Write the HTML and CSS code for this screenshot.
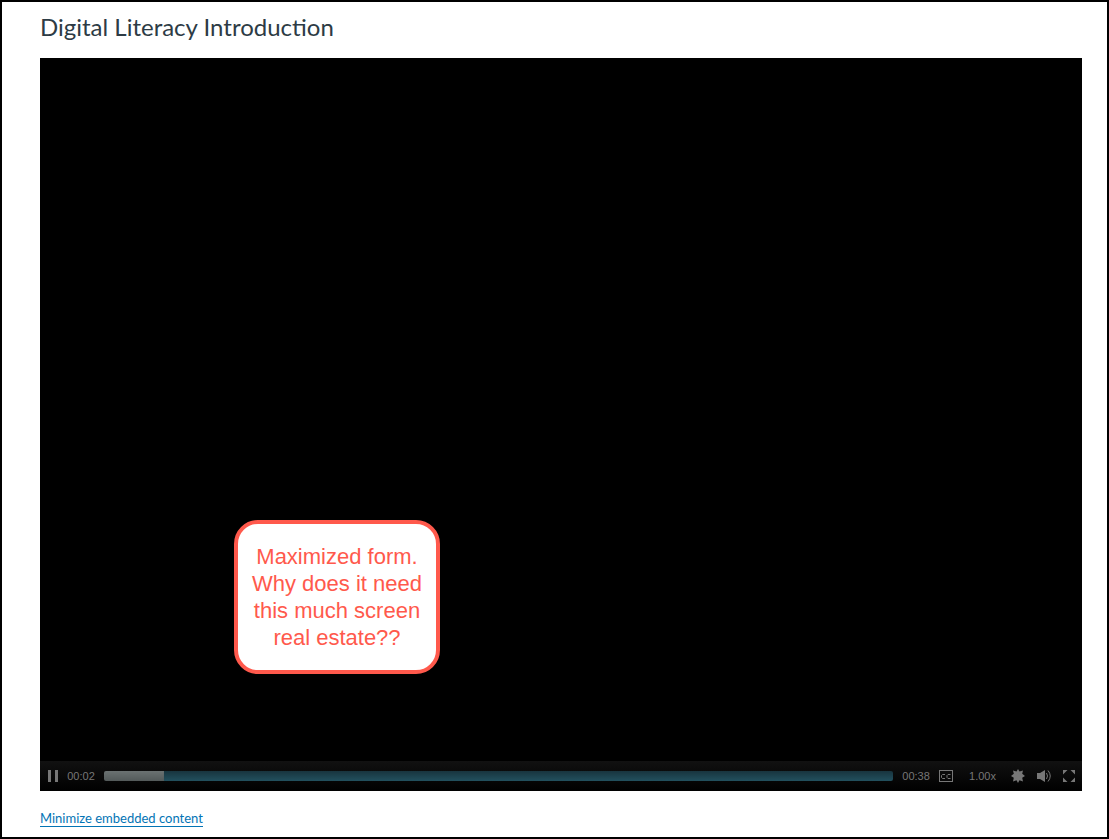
FILE: index.html
```html
<!DOCTYPE html>
<html lang="en">
<head>
  <meta charset="UTF-8" />
  <meta name="viewport" content="width=device-width, initial-scale=1" />
  <title>Digital Literacy Introduction</title>
  <link rel="stylesheet" href="styles.css">
</head>
<body>

  <h1 class="page-title">Digital Literacy Introduction</h1>

  <main class="player">
    <div class="screen"></div>

    <div class="controls">
      <button class="btn-control" title="Pause">
        <svg width="10" height="12" viewBox="0 0 10 12"><path d="M0 0h3v12H0zM7 0h3v12H7z" /></svg>
      </button>
      <span class="time">00:02</span>
      <input type="range" class="progress" min="0" max="788" value="60" aria-label="Position" style="--played: 7.6%" />
      <span class="time">00:38</span>
      <button class="btn-control btn-captions" title="Captions">
        <svg class="icon-line" width="14" height="12" viewBox="0 0 14 12">
          <rect x="0.5" y="0.5" width="13" height="11" />
          <path d="M6 4.5H3.5L2.5 5.5v2l1 1H6M11.5 4.5H9L8 5.5v2l1 1h2.5" />
        </svg>
      </button>
      <button class="btn-control btn-speed" title="Speed">1.00x</button>
      <button class="btn-control" title="Settings">
        <svg width="14" height="14" viewBox="0 0 14 14"><path d="M7 0l1.5 2.6L12 1.5l-.8 3.3L14 7l-2.8 1.7.8 3.8-3.5-1.2L7 14l-1.5-2.7L2 12.5l.8-3.8L0 7l2.8-2.2L2 1.5l3.5 1.1z" /></svg>
      </button>
      <button class="btn-control" title="Volume">
        <svg width="14" height="14" viewBox="0 0 14 14">
          <path d="M0 4h3l5-3v12l-5-3H0z" />
          <path class="icon-line" d="M9.5 4q2 3 0 6M11 1.5q4.5 5.5 0 11" />
        </svg>
      </button>
      <button class="btn-control" title="Fullscreen">
        <svg width="12" height="12" viewBox="0 0 12 12"><path d="M0 0h4.5L0 4.5zM7.5 0H12v4.5zM0 7.5L4.5 12H0zM12 7.5V12H7.5z" /></svg>
      </button>
    </div>

    <p class="callout">Maximized form. Why does it need this much screen real estate??</p>
  </main>

  <footer class="page-footer">
    <a class="link-minimize" href="#">Minimize embedded content</a>
  </footer>

</body>
</html>
```

FILE: styles.css
```css
* {
  box-sizing: border-box;
  margin: 0;
  padding: 0;
}

body {
  display: flex;
  flex-direction: column;
  min-height: 100vh;
  padding: 7px 25px 9px 38px;
  border: 2px solid #000;
  background: #fff;
  font-family: Lato, sans-serif;
  color: #2d3b45;
}

.page-title {
  margin-bottom: 13px;
  font-size: 24px;
  font-weight: 400;
  line-height: 36px;
}

.player {
  position: relative;
  display: flex;
  flex-direction: column;
  flex: 1;
  background: #000;
}

.screen {
  flex: 1;
}

.controls {
  display: flex;
  align-items: center;
  gap: 8px;
  height: 30px;
  padding: 0 7px 0 8px;
  background: linear-gradient(#111, #000);
  font-family: "Liberation Sans", Arial, sans-serif;
  font-size: 11px;
  line-height: 14px;
  color: #777;
}

.time {
  width: 30px;
  text-align: center;
}

.btn-control {
  display: flex;
  align-items: center;
  justify-content: center;
  border: none;
  background: none;
  color: inherit;
  font: inherit;
  cursor: pointer;
}

.btn-control svg {
  display: block;
  fill: #777;
}

.btn-control + .btn-control {
  margin-left: 4px;
}

.btn-control .icon-line {
  fill: none;
  stroke: #777;
}

.btn-control.btn-speed {
  margin: 0 3px 0 8px;
}

.progress {
  flex: 1;
  min-width: 0;
  height: 10px;
  border-radius: 2px;
  appearance: none;
  background:
    linear-gradient(#6b7272, #535a5a) 0 0 / var(--played) 100% no-repeat,
    linear-gradient(#18343e, #22505e);
  cursor: pointer;
}

.progress::-webkit-slider-thumb {
  appearance: none;
  width: 1px;
  height: 10px;
  background: transparent;
}

.callout {
  position: absolute;
  left: 194px;
  bottom: 117px;
  width: 206px;
  padding: 19px 12px;
  border: 4px solid #ff594c;
  border-radius: 24px;
  background: #fff;
  font-family: "Liberation Sans", Arial, sans-serif;
  font-size: 22px;
  line-height: 27px;
  text-align: center;
  color: #ff594c;
}

.page-footer {
  padding-top: 17px;
  font-size: 13px;
  line-height: 20px;
}

.link-minimize {
  border-bottom: 1px solid #0374b5;
  color: #0374b5;
  text-decoration: none;
}
```
